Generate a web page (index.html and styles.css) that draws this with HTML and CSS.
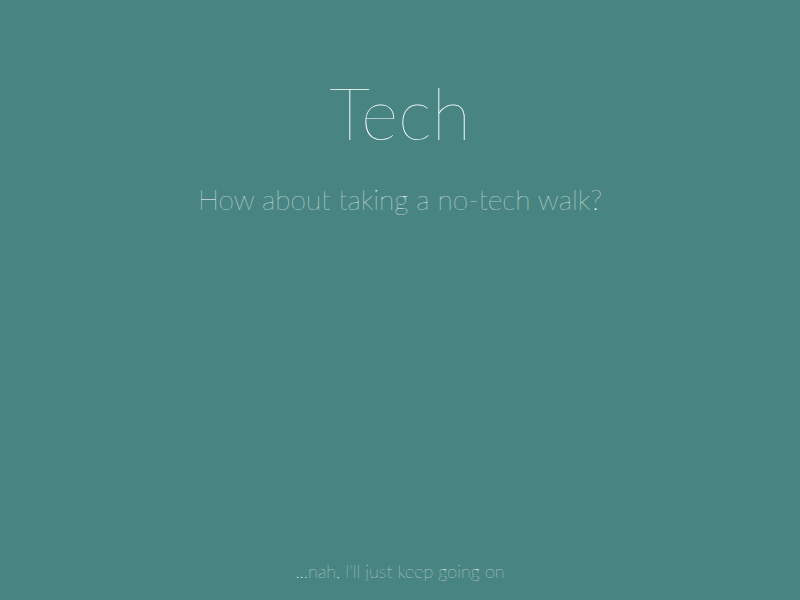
FILE: index.html
```html
<!DOCTYPE html>
<html>
<head>
<meta charset="utf-8">
<link rel="stylesheet" href="styles.css">
</head>
<body>
<main class="page">
  <section class="hero">
    <h1 class="title">Tech</h1>
    <p class="question">How about taking a no-tech walk?</p>
  </section>
  <footer class="footer">...nah, I'll just keep going on</footer>
</main>
</body>
</html>
```
FILE: styles.css
```css
html, body {
  margin: 0;
  height: 100%;
}
body {
  background: #488582;
  color: #ffffff;
  font-family: Lato, "Open Sans", sans-serif;
}
.page {
  height: 600px;
  display: flex;
  flex-direction: column;
  align-items: center;
}
.hero {
  display: flex;
  flex-direction: column;
  align-items: center;
  flex: 1;
}
.title {
  margin: 68px 0 0;
  font-size: 72px;
  font-weight: 100;
  line-height: 88px;
}
.question {
  margin: 26px 0 0;
  font-size: 28px;
  font-weight: 200;
  line-height: 34px;
}
.footer {
  font-size: 18px;
  font-weight: 200;
  line-height: 20px;
  padding-bottom: 19px;
}
```
